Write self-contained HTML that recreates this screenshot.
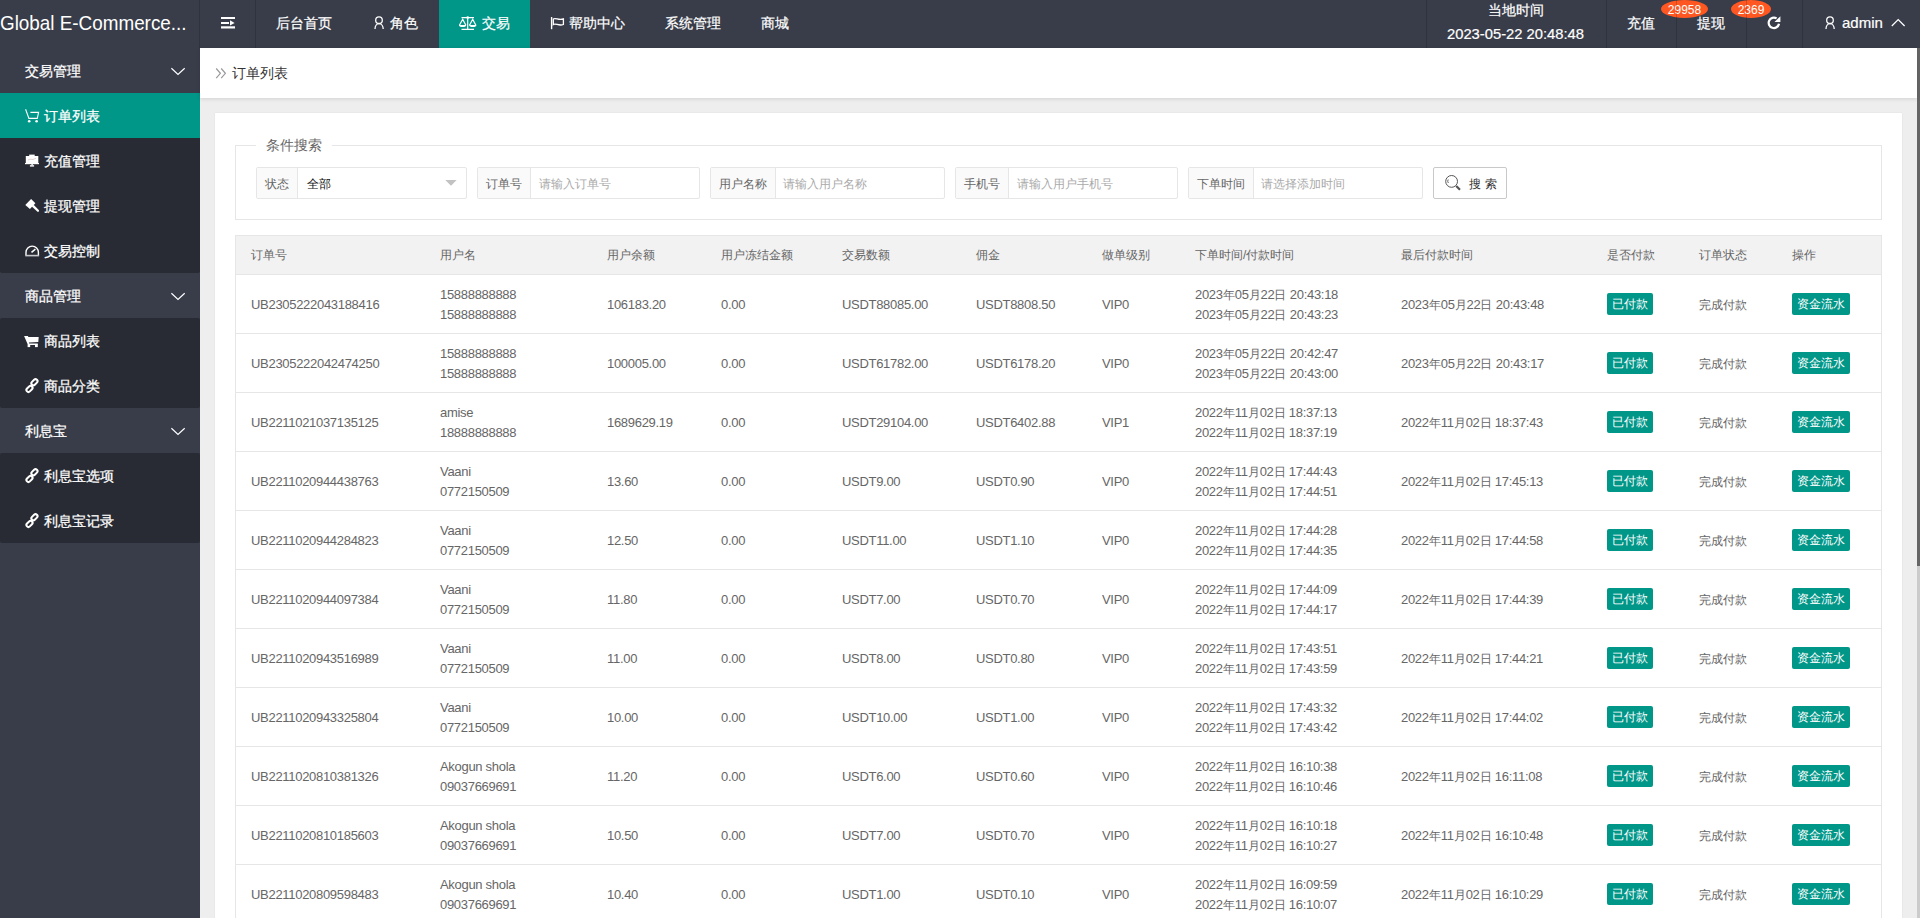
<!DOCTYPE html>
<html><head><meta charset="utf-8">
<style>
*{box-sizing:border-box;margin:0;padding:0}
html,body{width:1920px;height:918px;overflow:hidden}
body{font-family:"Liberation Sans",sans-serif;background:#eeeeee;position:relative;color:#666}
.abs{position:absolute}
#hdr{position:absolute;left:0;top:0;width:1920px;height:48px;background:#393d49;color:#fff;font-size:14px}
#hdr .t{position:absolute;top:0;line-height:46px;white-space:nowrap}
#hdr .sep{position:absolute;top:0;width:1px;height:48px;background:rgba(0,0,0,.16);z-index:2}
#logo{position:absolute;left:0;top:0;line-height:45px;font-size:21px;color:#fff;white-space:nowrap;transform:scaleX(0.898);transform-origin:0 0}
#act{position:absolute;left:439px;top:0;width:91px;height:48px;background:#009688}
.badge{position:absolute;top:0;height:18px;border-radius:50%;background:#ff5722;color:#fff;font-size:12px;line-height:20px;text-align:center}
#side{position:absolute;left:0;top:48px;width:200px;height:870px;background:#393d49;color:#fff;font-size:14px;-webkit-text-stroke:0.25px #fff}
#hdr .t{-webkit-text-stroke:0.2px #fff}
.grp{position:absolute;left:0;width:200px;height:45px;line-height:47px;padding-left:25px}
.kids{position:absolute;left:0;width:200px;background:#282b33;border-radius:2px}
.item{position:relative;height:45px;line-height:47px;padding-left:44px}
.item.on{background:#009688}
.ico{position:absolute}
#scroll{position:absolute;left:1917px;top:48px;width:3px;height:870px;background:linear-gradient(#666 0,#666 518px,#cccccc 518px)}
#crumb{position:absolute;left:200px;top:48px;width:1717px;height:50px;background:#fff;box-shadow:0 1px 4px rgba(0,0,0,.12)}
#card{position:absolute;left:215px;top:113px;width:1687px;height:820px;background:#fff;box-shadow:0 0 1px rgba(0,0,0,.12)}
#fs{position:absolute;left:20px;top:32px;width:1647px;height:75px;border:1px solid #e6e6e6}
#legend{position:absolute;left:41px;top:22px;padding:0 10px;background:#fff;font-size:14px;color:#666;line-height:20px}
.ig{position:absolute;top:54px;height:32px;border:1px solid #e6e6e6;border-radius:2px;font-size:12px;line-height:32px;background:#fff}
.ig .lb{position:absolute;left:0;top:0;height:30px;padding:0 8px;background:#fafafa;border-right:1px solid #e6e6e6;color:#666;white-space:nowrap}
.ig .in{position:absolute;top:0;height:30px;color:#aaa;white-space:nowrap}
#tbl{position:absolute;left:20px;top:122px;width:1647px;border-left:1px solid #e6e6e6;border-right:1px solid #e6e6e6;border-top:1px solid #e6e6e6}
table{border-collapse:collapse;table-layout:fixed;width:1645px}
th,td{padding:0 15px;text-align:left;font-weight:normal;color:#666;white-space:nowrap;font-size:13px;letter-spacing:-0.3px;border-bottom:1px solid #e6e6e6}
th{height:38px;background:#f2f2f2;font-size:12px;letter-spacing:0;padding-top:2px}
td i{font-style:normal;font-size:12px;letter-spacing:0}
td{height:59px;line-height:20px;padding-top:2px}
.bdg{position:relative;top:-1px;display:inline-block;height:22px;line-height:22px;padding:0 5px;background:#009688;color:#fff;border-radius:2px;font-size:12px;letter-spacing:0}
</style></head><body>
<div id="hdr">
  <div id="logo">Global E-Commerce...</div>
  <div class="sep" style="left:199px"></div>
  <div class="sep" style="left:255px"></div>
  <div id="act"></div>
  <div class="t" style="left:276px">后台首页</div>
  <div class="t" style="left:390px">角色</div>
  <div class="t" style="left:482px">交易</div>
  <div class="t" style="left:569px">帮助中心</div>
  <div class="t" style="left:665px">系统管理</div>
  <div class="t" style="left:761px">商城</div>
  <div class="sep" style="left:1426px"></div>
  <div class="t" style="left:1488px;top:-13px">当地时间</div>
  <div class="t" style="left:1447px;top:11px;font-size:15.5px;transform:scaleX(0.952);transform-origin:0 0">2023-05-22 20:48:48</div>
  <div class="sep" style="left:1606px"></div>
  <div class="t" style="left:1627px">充值</div>
  <div class="sep" style="left:1676px"></div>
  <div class="t" style="left:1697px">提现</div>
  <div class="sep" style="left:1746px"></div>
  <div class="sep" style="left:1802px"></div>
  <div class="t" style="left:1842px;font-size:15px">admin</div>
  
<svg class="abs" style="left:0;top:0" width="1920" height="48" viewBox="0 0 1920 48">
  <g fill="#fff">
    <rect x="221" y="17" width="14" height="2"/>
    <rect x="221" y="22" width="8" height="2"/>
    <path d="M230 20.3 L234.6 22.9 L230 25.5 Z"/>
    <rect x="221" y="26.3" width="14" height="2.2"/>
  </g>
  <g fill="none" stroke="#fff" stroke-width="1.3">
    <circle cx="379" cy="20.2" r="3.3"/>
    <path d="M375 29 C375 25.8 376.8 23.6 379 23.6 C381.2 23.6 383.2 25.8 383.2 29"/>
    <circle cx="1830" cy="20.2" r="3.3"/>
    <path d="M1826 29 C1826 25.8 1827.8 23.6 1830 23.6 C1832.2 23.6 1834.2 25.8 1834.2 29"/>
  </g>
  <g fill="none" stroke="#fff" stroke-width="1.2">
    <path d="M461.5 17.6 H474 M467.7 17.6 V29.4 M461.5 29.4 H474"/>
    <path d="M459.4 25.2 L462.7 19.3 L465.9 25.2 M469.5 25.2 L472.7 19.3 L475.9 25.2"/>
  </g>
  <g fill="#fff">
    <circle cx="467.7" cy="17.6" r="1.3"/>
    <path d="M459 25 H466.2 A3.6 2.1 0 0 1 459 25 Z"/>
    <path d="M469.2 25 H476.4 A3.6 2.1 0 0 1 469.2 25 Z"/>
  </g>
  <g fill="none" stroke="#fff" stroke-width="1.4">
    <path d="M551.6 17 V29.2"/>
    <path d="M553.3 19 C555.6 17.2 558.6 20.8 563.4 18.9 V24.5 C558.6 26.4 555.6 22.8 553.3 24.6 Z" stroke-width="1.3"/>
  </g>
  <g fill="none" stroke="#fff">
    <path d="M1779 23.8 A5.2 5.2 0 1 1 1776.6 18.4" stroke-width="2.2"/>
  </g>
  <path d="M1780.4 16.2 V22.1 H1774.5 Z" fill="#fff"/>
  <path d="M1891.8 26 L1898.2 19.6 L1904.6 26" fill="none" stroke="#fff" stroke-width="1.3"/>
</svg>
  <div class="badge" style="left:1661px;width:47px">29958</div>
  <div class="badge" style="left:1731px;width:40px">2369</div>
</div>
<div id="side">
  <div class="grp" style="top:0">交易管理</div>
  <div class="kids" style="top:45px">
    <div class="item on">订单列表</div>
    <div class="item">充值管理</div>
    <div class="item">提现管理</div>
    <div class="item">交易控制</div>
  </div>
  <div class="grp" style="top:225px">商品管理</div>
  <div class="kids" style="top:270px">
    <div class="item">商品列表</div>
    <div class="item">商品分类</div>
  </div>
  <div class="grp" style="top:360px">利息宝</div>
  <div class="kids" style="top:405px">
    <div class="item">利息宝选项</div>
    <div class="item">利息宝记录</div>
  </div>
  <svg class="abs" style="left:0;top:0" width="200" height="500" viewBox="0 48 200 500">
    <g fill="none" stroke="#fff" stroke-width="1.2">
      <path d="M171.4 68.3 L178 74.5 L184.7 68.3"/>
      <path d="M171.4 293.3 L178 299.5 L184.7 293.3"/>
      <path d="M171.4 428.3 L178 434.5 L184.7 428.3"/>
    </g>
    <!-- cart outline -->
    <g fill="none" stroke="#fff" stroke-width="1.1">
      <path d="M25.6 109.3 L28.9 118.4 H37.3 L38.6 112.4 H30.4"/>
    </g>
    <g fill="#fff"><circle cx="29.2" cy="121.3" r="1.3"/><circle cx="36.6" cy="121.3" r="1.3"/></g>
    <!-- monitor -->
    <g fill="#fff">
      <rect x="29.2" y="154.6" width="5.5" height="1.6"/>
      <rect x="25.8" y="156" width="12.5" height="7.6"/>
      <rect x="25" y="163" width="14" height="1.2"/>
      <rect x="31.4" y="164" width="1.4" height="1.5"/>
      <rect x="29.9" y="165.2" width="4.2" height="1.4"/>
    </g>
    <path d="M28 160 L30 159.2 L33 159.5 L36 158.2" stroke="#d9c7c7" stroke-width="0.8" fill="none"/>
    <!-- gavel -->
    <g fill="#fff">
      <path d="M31.1 199.1 L35.4 203.3 L29.9 208.9 L25.3 205 Z"/>
      <path d="M31.8 206.6 L33.6 204.8 L39 210.2 Q39.3 211.8 37.8 212 Z"/>
    </g>
    <!-- gauge -->
    <g fill="none" stroke="#fff" stroke-width="1.4">
      <path d="M26 255.5 V252.3 A6.2 6.2 0 0 1 38.4 252.3 V255.5"/>
      <path d="M31.5 252.4 L35.4 249.2" stroke-width="1.5"/>
    </g>
    <rect x="25.3" y="254.8" width="13.8" height="1.6" fill="#c8c8cc"/>
    <!-- filled cart -->
    <g fill="#fff">
      <path d="M24.1 335.9 H27.9 L28.4 337 H38.7 L38.3 342 L28.9 342.6 L29.1 343.6 H37.8 V345 H28 Z"/>
      <rect x="27.6" y="344.5" width="2.6" height="2.6"/>
      <rect x="35" y="344.5" width="2.8" height="2.6"/>
    </g>
    <!-- links -->
    <g id="lnk" fill="none" stroke="#fff" stroke-width="2">
      <rect x="-2" y="-3.5" width="4" height="7" rx="2" transform="translate(34.45 382.25) rotate(45)"/>
      <rect x="-2" y="-3.5" width="4" height="7" rx="2" transform="translate(29.5 388.9) rotate(45)"/>
    </g>
    <use href="#lnk" transform="translate(0 90)"/>
    <use href="#lnk" transform="translate(0 135)"/>
  </svg>
</div>
<div id="scroll"></div>

<div id="crumb">
  <svg class="abs" style="left:0;top:0" width="60" height="50" viewBox="200 48 60 50"><path d="M216.2 68.5 L220.4 73.3 L216.2 78.2 M221.2 68.5 L225.4 73.3 L221.2 78.2" fill="none" stroke="#999" stroke-width="1.2"/></svg>
  <div class="abs" style="left:32px;top:0;line-height:50px;font-size:14px;color:#333">订单列表</div>
</div>
<div id="card">
  <div id="fs"></div>
  <div id="legend">条件搜索</div>
  <div class="ig" style="left:41px;width:211px"><span class="lb">状态</span><span class="in" style="left:50px;color:#111">全部</span></div>
  <div class="ig" style="left:262px;width:223px"><span class="lb">订单号</span><span class="in" style="left:61px">请输入订单号</span></div>
  <div class="ig" style="left:495px;width:235px"><span class="lb">用户名称</span><span class="in" style="left:72px">请输入用户名称</span></div>
  <div class="ig" style="left:740px;width:223px"><span class="lb">手机号</span><span class="in" style="left:61px">请输入用户手机号</span></div>
  <div class="ig" style="left:973px;width:235px"><span class="lb">下单时间</span><span class="in" style="left:72px">请选择添加时间</span></div>
  <div class="ig" style="left:1218px;width:74px;border-color:#c9c9c9;color:#333"><span class="abs" style="left:35px;letter-spacing:4px">搜索</span></div>
  
  <svg class="abs" style="left:0;top:0" width="1687" height="120" viewBox="215 113 1687 120">
    <path d="M445.3 180.1 H456.7 L451 185.8 Z" fill="#c2c2c2"/>
    <circle cx="1451.6" cy="181.4" r="5.9" fill="none" stroke="#555" stroke-width="1"/>
    <path d="M1448.2 179.5 A3 3 0 0 0 1448.4 183" fill="none" stroke="#555" stroke-width="0.9"/>
    <path d="M1456.2 186 L1460 189.8" stroke="#555" stroke-width="2.2" fill="none"/>
  </svg>
  <div id="tbl"><table>
  <colgroup><col style="width:189px"><col style="width:167px"><col style="width:114px"><col style="width:121px"><col style="width:134px"><col style="width:126px"><col style="width:93px"><col style="width:206px"><col style="width:206px"><col style="width:92px"><col style="width:93px"><col style="width:104px"></colgroup>
  <thead><tr><th>订单号</th><th>用户名</th><th>用户余额</th><th>用户冻结金额</th><th>交易数额</th><th>佣金</th><th>做单级别</th><th>下单时间/付款时间</th><th>最后付款时间</th><th>是否付款</th><th>订单状态</th><th>操作</th></tr></thead>
  <tbody id="tb">
<tr><td>UB2305222043188416</td><td>15888888888<br>15888888888</td><td>106183.20</td><td>0.00</td><td>USDT88085.00</td><td>USDT8808.50</td><td>VIP0</td><td>2023<i>年</i>05<i>月</i>22<i>日</i> 20:43:18<br>2023<i>年</i>05<i>月</i>22<i>日</i> 20:43:23</td><td>2023<i>年</i>05<i>月</i>22<i>日</i> 20:43:48</td><td><span class="bdg">已付款</span></td><td><i>完成付款</i></td><td><span class="bdg">资金流水</span></td></tr>
<tr><td>UB2305222042474250</td><td>15888888888<br>15888888888</td><td>100005.00</td><td>0.00</td><td>USDT61782.00</td><td>USDT6178.20</td><td>VIP0</td><td>2023<i>年</i>05<i>月</i>22<i>日</i> 20:42:47<br>2023<i>年</i>05<i>月</i>22<i>日</i> 20:43:00</td><td>2023<i>年</i>05<i>月</i>22<i>日</i> 20:43:17</td><td><span class="bdg">已付款</span></td><td><i>完成付款</i></td><td><span class="bdg">资金流水</span></td></tr>
<tr><td>UB2211021037135125</td><td>amise<br>18888888888</td><td>1689629.19</td><td>0.00</td><td>USDT29104.00</td><td>USDT6402.88</td><td>VIP1</td><td>2022<i>年</i>11<i>月</i>02<i>日</i> 18:37:13<br>2022<i>年</i>11<i>月</i>02<i>日</i> 18:37:19</td><td>2022<i>年</i>11<i>月</i>02<i>日</i> 18:37:43</td><td><span class="bdg">已付款</span></td><td><i>完成付款</i></td><td><span class="bdg">资金流水</span></td></tr>
<tr><td>UB2211020944438763</td><td>Vaani<br>0772150509</td><td>13.60</td><td>0.00</td><td>USDT9.00</td><td>USDT0.90</td><td>VIP0</td><td>2022<i>年</i>11<i>月</i>02<i>日</i> 17:44:43<br>2022<i>年</i>11<i>月</i>02<i>日</i> 17:44:51</td><td>2022<i>年</i>11<i>月</i>02<i>日</i> 17:45:13</td><td><span class="bdg">已付款</span></td><td><i>完成付款</i></td><td><span class="bdg">资金流水</span></td></tr>
<tr><td>UB2211020944284823</td><td>Vaani<br>0772150509</td><td>12.50</td><td>0.00</td><td>USDT11.00</td><td>USDT1.10</td><td>VIP0</td><td>2022<i>年</i>11<i>月</i>02<i>日</i> 17:44:28<br>2022<i>年</i>11<i>月</i>02<i>日</i> 17:44:35</td><td>2022<i>年</i>11<i>月</i>02<i>日</i> 17:44:58</td><td><span class="bdg">已付款</span></td><td><i>完成付款</i></td><td><span class="bdg">资金流水</span></td></tr>
<tr><td>UB2211020944097384</td><td>Vaani<br>0772150509</td><td>11.80</td><td>0.00</td><td>USDT7.00</td><td>USDT0.70</td><td>VIP0</td><td>2022<i>年</i>11<i>月</i>02<i>日</i> 17:44:09<br>2022<i>年</i>11<i>月</i>02<i>日</i> 17:44:17</td><td>2022<i>年</i>11<i>月</i>02<i>日</i> 17:44:39</td><td><span class="bdg">已付款</span></td><td><i>完成付款</i></td><td><span class="bdg">资金流水</span></td></tr>
<tr><td>UB2211020943516989</td><td>Vaani<br>0772150509</td><td>11.00</td><td>0.00</td><td>USDT8.00</td><td>USDT0.80</td><td>VIP0</td><td>2022<i>年</i>11<i>月</i>02<i>日</i> 17:43:51<br>2022<i>年</i>11<i>月</i>02<i>日</i> 17:43:59</td><td>2022<i>年</i>11<i>月</i>02<i>日</i> 17:44:21</td><td><span class="bdg">已付款</span></td><td><i>完成付款</i></td><td><span class="bdg">资金流水</span></td></tr>
<tr><td>UB2211020943325804</td><td>Vaani<br>0772150509</td><td>10.00</td><td>0.00</td><td>USDT10.00</td><td>USDT1.00</td><td>VIP0</td><td>2022<i>年</i>11<i>月</i>02<i>日</i> 17:43:32<br>2022<i>年</i>11<i>月</i>02<i>日</i> 17:43:42</td><td>2022<i>年</i>11<i>月</i>02<i>日</i> 17:44:02</td><td><span class="bdg">已付款</span></td><td><i>完成付款</i></td><td><span class="bdg">资金流水</span></td></tr>
<tr><td>UB2211020810381326</td><td>Akogun shola<br>09037669691</td><td>11.20</td><td>0.00</td><td>USDT6.00</td><td>USDT0.60</td><td>VIP0</td><td>2022<i>年</i>11<i>月</i>02<i>日</i> 16:10:38<br>2022<i>年</i>11<i>月</i>02<i>日</i> 16:10:46</td><td>2022<i>年</i>11<i>月</i>02<i>日</i> 16:11:08</td><td><span class="bdg">已付款</span></td><td><i>完成付款</i></td><td><span class="bdg">资金流水</span></td></tr>
<tr><td>UB2211020810185603</td><td>Akogun shola<br>09037669691</td><td>10.50</td><td>0.00</td><td>USDT7.00</td><td>USDT0.70</td><td>VIP0</td><td>2022<i>年</i>11<i>月</i>02<i>日</i> 16:10:18<br>2022<i>年</i>11<i>月</i>02<i>日</i> 16:10:27</td><td>2022<i>年</i>11<i>月</i>02<i>日</i> 16:10:48</td><td><span class="bdg">已付款</span></td><td><i>完成付款</i></td><td><span class="bdg">资金流水</span></td></tr>
<tr><td>UB2211020809598483</td><td>Akogun shola<br>09037669691</td><td>10.40</td><td>0.00</td><td>USDT1.00</td><td>USDT0.10</td><td>VIP0</td><td>2022<i>年</i>11<i>月</i>02<i>日</i> 16:09:59<br>2022<i>年</i>11<i>月</i>02<i>日</i> 16:10:07</td><td>2022<i>年</i>11<i>月</i>02<i>日</i> 16:10:29</td><td><span class="bdg">已付款</span></td><td><i>完成付款</i></td><td><span class="bdg">资金流水</span></td></tr>
</tbody>
  </table></div>
</div>
</body></html>
